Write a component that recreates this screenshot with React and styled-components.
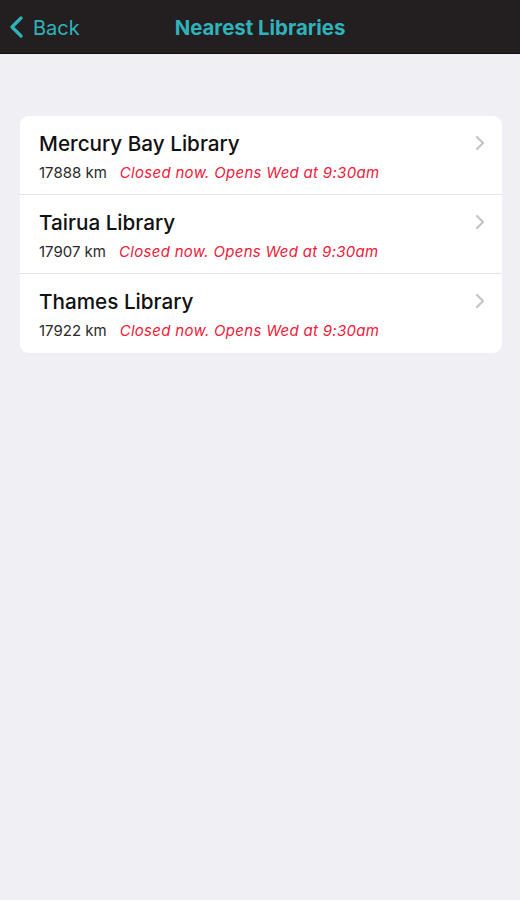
import React from 'react'
import styled, { createGlobalStyle } from 'styled-components'

const libraries = [
    { name: 'Mercury Bay Library', distance: '17888 km', status: 'Closed now. Opens Wed at 9:30am' },
    { name: 'Tairua Library', distance: '17907 km', status: 'Closed now. Opens Wed at 9:30am' },
    { name: 'Thames Library', distance: '17922 km', status: 'Closed now. Opens Wed at 9:30am' },
]

function App() {
    return (
        <Page>
            <GlobalStyle />
            <NavBar>
                <BackButton>
                    <svg width="16" height="22" viewBox="0 0 16 22">
                        <path d="M12 2 L3 11 L12 20" fill="none" stroke="#2fb3bb" strokeWidth="3.2" strokeLinecap="round" strokeLinejoin="round" />
                    </svg>
                    <span>Back</span>
                </BackButton>
                <Title>Nearest Libraries</Title>
            </NavBar>
            <Content>
                <Card>
                    {libraries.map((lib, i) => (
                        <Row key={lib.name} last={i === libraries.length - 1}>
                            <RowText>
                                <Name>{lib.name}</Name>
                                <Details>
                                    <Distance>{lib.distance}</Distance>
                                    <Status>{lib.status}</Status>
                                </Details>
                            </RowText>
                            <Chevron width="12" height="18" viewBox="0 0 12 18">
                                <path d="M3 3 L9 9 L3 15" fill="none" stroke="#c4c4c8" strokeWidth="2.2" strokeLinecap="round" strokeLinejoin="round" />
                            </Chevron>
                        </Row>
                    ))}
                </Card>
            </Content>
        </Page>
    )
}

export default App

const GlobalStyle = createGlobalStyle`
    body {
        margin: 0;
        background: #efeff4;
        font-family: Inter, "Liberation Sans", sans-serif;
    }
`
const Page = styled.div`
    min-height: 900px;
    background: #efeff4;
`
const NavBar = styled.div`
    height: 53px;
    background: #231f20;
    border-bottom: 1px solid #111;
    display: flex;
    align-items: center;
    justify-content: center;
    position: relative;
`
const BackButton = styled.div`
    position: absolute;
    left: 9px;
    top: 0;
    bottom: 0;
    display: flex;
    align-items: center;
    gap: 8px;
    color: #2fb3bb;
    font-size: 20px;
    span {
        margin-top: 2px;
    }
`
const Title = styled.div`
    color: #2fb3bb;
    font-size: 20.4px;
    font-weight: 700;
    margin-top: 2px;
`
const Content = styled.div`
    padding: 62px 18px 0 20px;
`
const Card = styled.div`
    background: #fff;
    border-radius: 9px;
    overflow: hidden;
`
const Row = styled.div`
    height: 79px;
    display: flex;
    align-items: center;
    padding: 0 16px 0 19px;
    box-sizing: border-box;
    border-bottom: ${props => props.last ? 'none' : '1px solid #e4e4e8'};
`
const RowText = styled.div`
    flex: 1;
    display: flex;
    flex-direction: column;
    gap: 7px;
    margin-top: 2px;
`
const Name = styled.div`
    font-size: 20.7px;
    color: #111;
    font-weight: 500;
`
const Details = styled.div`
    display: flex;
    align-items: baseline;
    gap: 13px;
    font-size: 15px;
`
const Distance = styled.span`
    color: #2a2a2a;
`
const Status = styled.span`
    color: #f0203a;
    font-style: italic;
    letter-spacing: 0.3px;
`
const Chevron = styled.svg`
    align-self: flex-start;
    margin-top: 18px;
`
